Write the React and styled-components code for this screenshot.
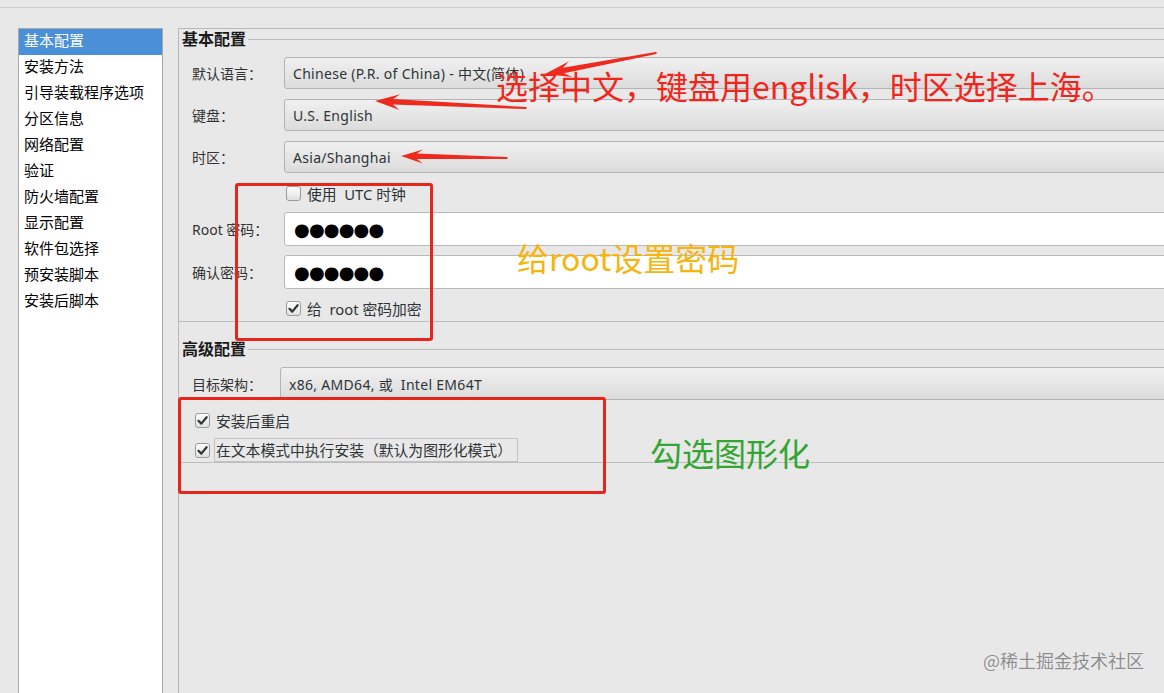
import React from 'react'
import styled, { createGlobalStyle } from 'styled-components'

const GlobalStyle = createGlobalStyle`
  html, body {
    margin: 0;
    padding: 0;
    overflow: hidden;
    background: #e8e8e8;
  }
  body {
    font-family: "Noto Sans", "Noto Sans CJK SC", sans-serif;
  }
`

const Screen = styled.div`
  position: relative;
  width: 1164px;
  height: 693px;
  overflow: hidden;
  background: #e8e8e8;
  display: flex;
  flex-direction: column;
`

const MenuStrip = styled.div`
  height: 7px;
  flex-shrink: 0;
  border-bottom: 1px solid #cdcdcd;
`

const Body = styled.div`
  flex: 1;
  display: flex;
  gap: 15px;
  padding: 20px 0 0 18px;
  min-height: 0;
`

const SideList = styled.ul`
  width: 145px;
  flex-shrink: 0;
  box-sizing: border-box;
  margin: 0;
  padding: 0;
  list-style: none;
  background: #fff;
  border: 1px solid #a9a9a9;
  border-bottom: none;
`

const SideItem = styled.li`
  height: 26px;
  line-height: 26px;
  padding-left: 5px;
  font: 15px 'Noto Sans CJK SC', sans-serif;
  color: ${(p) => (p.$active ? '#fff' : '#000')};
  background: ${(p) => (p.$active ? '#4a90d9' : 'transparent')};
  white-space: nowrap;
`

const Panel = styled.section`
  width: 1040px;
  flex-shrink: 0;
  box-sizing: border-box;
  border-top: 1px solid #b9b9b9;
  border-left: 1px solid #b9b9b9;
  display: flex;
  flex-direction: column;
`

const Group = styled.div`
  display: flex;
  flex-direction: column;
  margin-top: ${(p) => p.$mt || 0}px;
  padding-bottom: ${(p) => p.$pb || 0}px;
  border-bottom: 1px solid #bdbdbd;
`

const GroupHead = styled.div`
  height: 20px;
  display: flex;
  align-items: center;
  padding-left: 3px;
  h3 {
    margin: -2px 0 0;
    font: 700 16px/20px 'Noto Sans CJK SC', sans-serif;
    color: #1a1a1a;
  }
  &::after {
    content: '';
    flex: 1;
    margin-left: 2px;
    border-top: 1px solid #bdbdbd;
  }
`

const Row = styled.div`
  display: flex;
  align-items: center;
  height: ${(p) => p.$h}px;
  margin-top: ${(p) => p.$mt}px;
  padding-left: ${(p) => p.$pl || 13}px;
`

const Label = styled.div`
  width: ${(p) => p.$w}px;
  flex-shrink: 0;
  font: 14px "Noto Sans", 'Noto Sans CJK SC', sans-serif;
  color: #333;
  white-space: pre;
`

const Combo = styled.div`
  flex: 1;
  align-self: stretch;
  display: flex;
  align-items: center;
  padding-left: 8px;
  border: 1px solid #b3b3b3;
  border-radius: 3px;
  background: linear-gradient(#f0f0f0, #dcdcdc);
  font: 14px "Noto Sans", 'Noto Sans CJK SC', sans-serif;
  letter-spacing: 0.3px;
  color: #2e3436;
  white-space: pre;
`

const Secret = styled.div`
  flex: 1;
  align-self: stretch;
  display: flex;
  align-items: center;
  padding-left: 9px;
  background: #fff;
  border: 1px solid #b9b9b9;
  border-radius: 3px;
  font: 18px 'DejaVu Sans', sans-serif;
  letter-spacing: -0.8px;
  color: #000;
`

const Box = styled.span`
  width: 15px;
  height: 15px;
  box-sizing: border-box;
  flex-shrink: 0;
  border: 1px solid #9b9b9b;
  border-radius: 3px;
  background: linear-gradient(#fdfdfd, #e0e0e0);
  display: inline-flex;
  align-items: center;
  justify-content: center;
`

const CheckText = styled.span`
  margin-left: ${(p) => (p.$focus ? 4 : 6)}px;
  padding: ${(p) => (p.$focus ? '0 5px 0 1px' : 0)};
  height: ${(p) => (p.$focus ? '22px' : 'auto')};
  line-height: ${(p) => (p.$focus ? '22px' : 'normal')};
  border: ${(p) => (p.$focus ? '1px solid #c3c3c3' : 'none')};
  font: 14.8px "Noto Sans", 'Noto Sans CJK SC', sans-serif;
  color: #2e3436;
  white-space: pre;
`

const Overlay = styled.div`
  position: absolute;
  inset: 0;
  pointer-events: none;
`

const Note = styled.div`
  position: absolute;
  left: ${(p) => p.$x}px;
  top: ${(p) => p.$y}px;
  font: 32px/1 'Noto Sans CJK SC', sans-serif;
  color: ${(p) => p.$color};
  white-space: nowrap;
`

const Frame = styled.div`
  position: absolute;
  left: ${(p) => p.$x}px;
  top: ${(p) => p.$y}px;
  width: ${(p) => p.$w}px;
  height: ${(p) => p.$h}px;
  box-sizing: border-box;
  border: 3px solid #e8251b;
  border-radius: 3px;
`

const Watermark = styled.div`
  position: absolute;
  right: 20px;
  bottom: 20px;
  font: 18px 'Noto Sans CJK SC', sans-serif;
  color: #8d8d8d;
  text-shadow: 0 0 1px #fff;
`

const Check = ({ on }) => (
  <Box>
    {on && (
      <svg width='11' height='11' viewBox='0 0 11 11'>
        <path d='M1.5 5.8 L4.3 8.6 L9.6 2.2' fill='none' stroke='#2e3436' strokeWidth='2.2' strokeLinecap='round' strokeLinejoin='round' />
      </svg>
    )}
  </Box>
)

const arrowPoints = (tip, tail, head, barb) => {
  const dx = tail[0] - tip[0]
  const dy = tail[1] - tip[1]
  const len = Math.hypot(dx, dy)
  const ux = dx / len
  const uy = dy / len
  const nx = -uy
  const ny = ux
  const p = (d, w) => [tip[0] + ux * d + nx * w, tip[1] + uy * d + ny * w]
  const pts = [
    tip,
    p(head, barb),
    p(head * 0.72, 2.8),
    p(len, 1),
    p(len + 1, 0),
    p(len, -1),
    p(head * 0.72, -2.8),
    p(head, -barb),
  ]
  return pts.map((q) => q[0].toFixed(1) + ',' + q[1].toFixed(1)).join(' ')
}

const arrows = [
  { tip: [545, 74], tail: [656, 53], head: 26, barb: 8 },
  { tip: [375, 101], tail: [526, 108], head: 25, barb: 8 },
  { tip: [401, 156], tail: [507, 158], head: 22, barb: 7 },
]

const menu = ['基本配置', '安装方法', '引导装载程序选项', '分区信息', '网络配置', '验证', '防火墙配置', '显示配置', '软件包选择', '预安装脚本', '安装后脚本']

const App = () => {
  return (
    <Screen>
      <GlobalStyle />
      <MenuStrip />
      <Body>
        <SideList>
          {menu.map((m, i) => (
            <SideItem key={m} $active={i === 0}>
              {m}
            </SideItem>
          ))}
        </SideList>
        <Panel>
          <Group $pb={3}>
            <GroupHead>
              <h3>基本配置</h3>
            </GroupHead>
            <Row $h={32} $mt={8}>
              <Label $w={92}>默认语言：</Label>
              <Combo>Chinese (P.R. of China) - 中文(简体)</Combo>
            </Row>
            <Row $h={32} $mt={10}>
              <Label $w={92}>键盘：</Label>
              <Combo>U.S. English</Combo>
            </Row>
            <Row $h={32} $mt={10}>
              <Label $w={92}>时区：</Label>
              <Combo>Asia/Shanghai</Combo>
            </Row>
            <Row $h={20} $mt={10} $pl={107}>
              <Check />
              <CheckText>使用  UTC 时钟</CheckText>
            </Row>
            <Row $h={34} $mt={9}>
              <Label $w={92}>Root 密码：</Label>
              <Secret>●●●●●●</Secret>
            </Row>
            <Row $h={34} $mt={9}>
              <Label $w={92}>确认密码：</Label>
              <Secret>●●●●●●</Secret>
            </Row>
            <Row $h={20} $mt={9} $pl={107}>
              <Check on />
              <CheckText>给  root 密码加密</CheckText>
            </Row>
          </Group>
          <Group $mt={17}>
            <GroupHead>
              <h3>高级配置</h3>
            </GroupHead>
            <Row $h={33} $mt={8}>
              <Label $w={88}>目标架构：</Label>
              <Combo>x86, AMD64, 或  Intel EM64T</Combo>
            </Row>
            <Row $h={20} $mt={10} $pl={16}>
              <Check on />
              <CheckText>安装后重启</CheckText>
            </Row>
            <Row $h={24} $mt={8} $pl={16}>
              <Check on />
              <CheckText $focus>在文本模式中执行安装（默认为图形化模式）</CheckText>
            </Row>
          </Group>
        </Panel>
      </Body>

      <Overlay>
        <svg width='1164' height='693' style={{ position: 'absolute', left: 0, top: 0 }}>
          {arrows.map((a, i) => (
            <polygon key={i} points={arrowPoints(a.tip, a.tail, a.head, a.barb)} fill='#ee2a1e' />
          ))}
        </svg>
        <Frame $x={235} $y={183} $w={198} $h={158} />
        <Frame $x={178} $y={397} $w={428} $h={97} />
        <Note $x={496} $y={69} $color='#f0261c'>
          选择中文，键盘用englisk，时区选择上海。
        </Note>
        <Note $x={517} $y={241} $color='#f6b40e'>
          给root设置密码
        </Note>
        <Note $x={650} $y={436} $color='#33a532'>
          勾选图形化
        </Note>
        <Watermark>@稀土掘金技术社区</Watermark>
      </Overlay>
    </Screen>
  )
}

export default App
